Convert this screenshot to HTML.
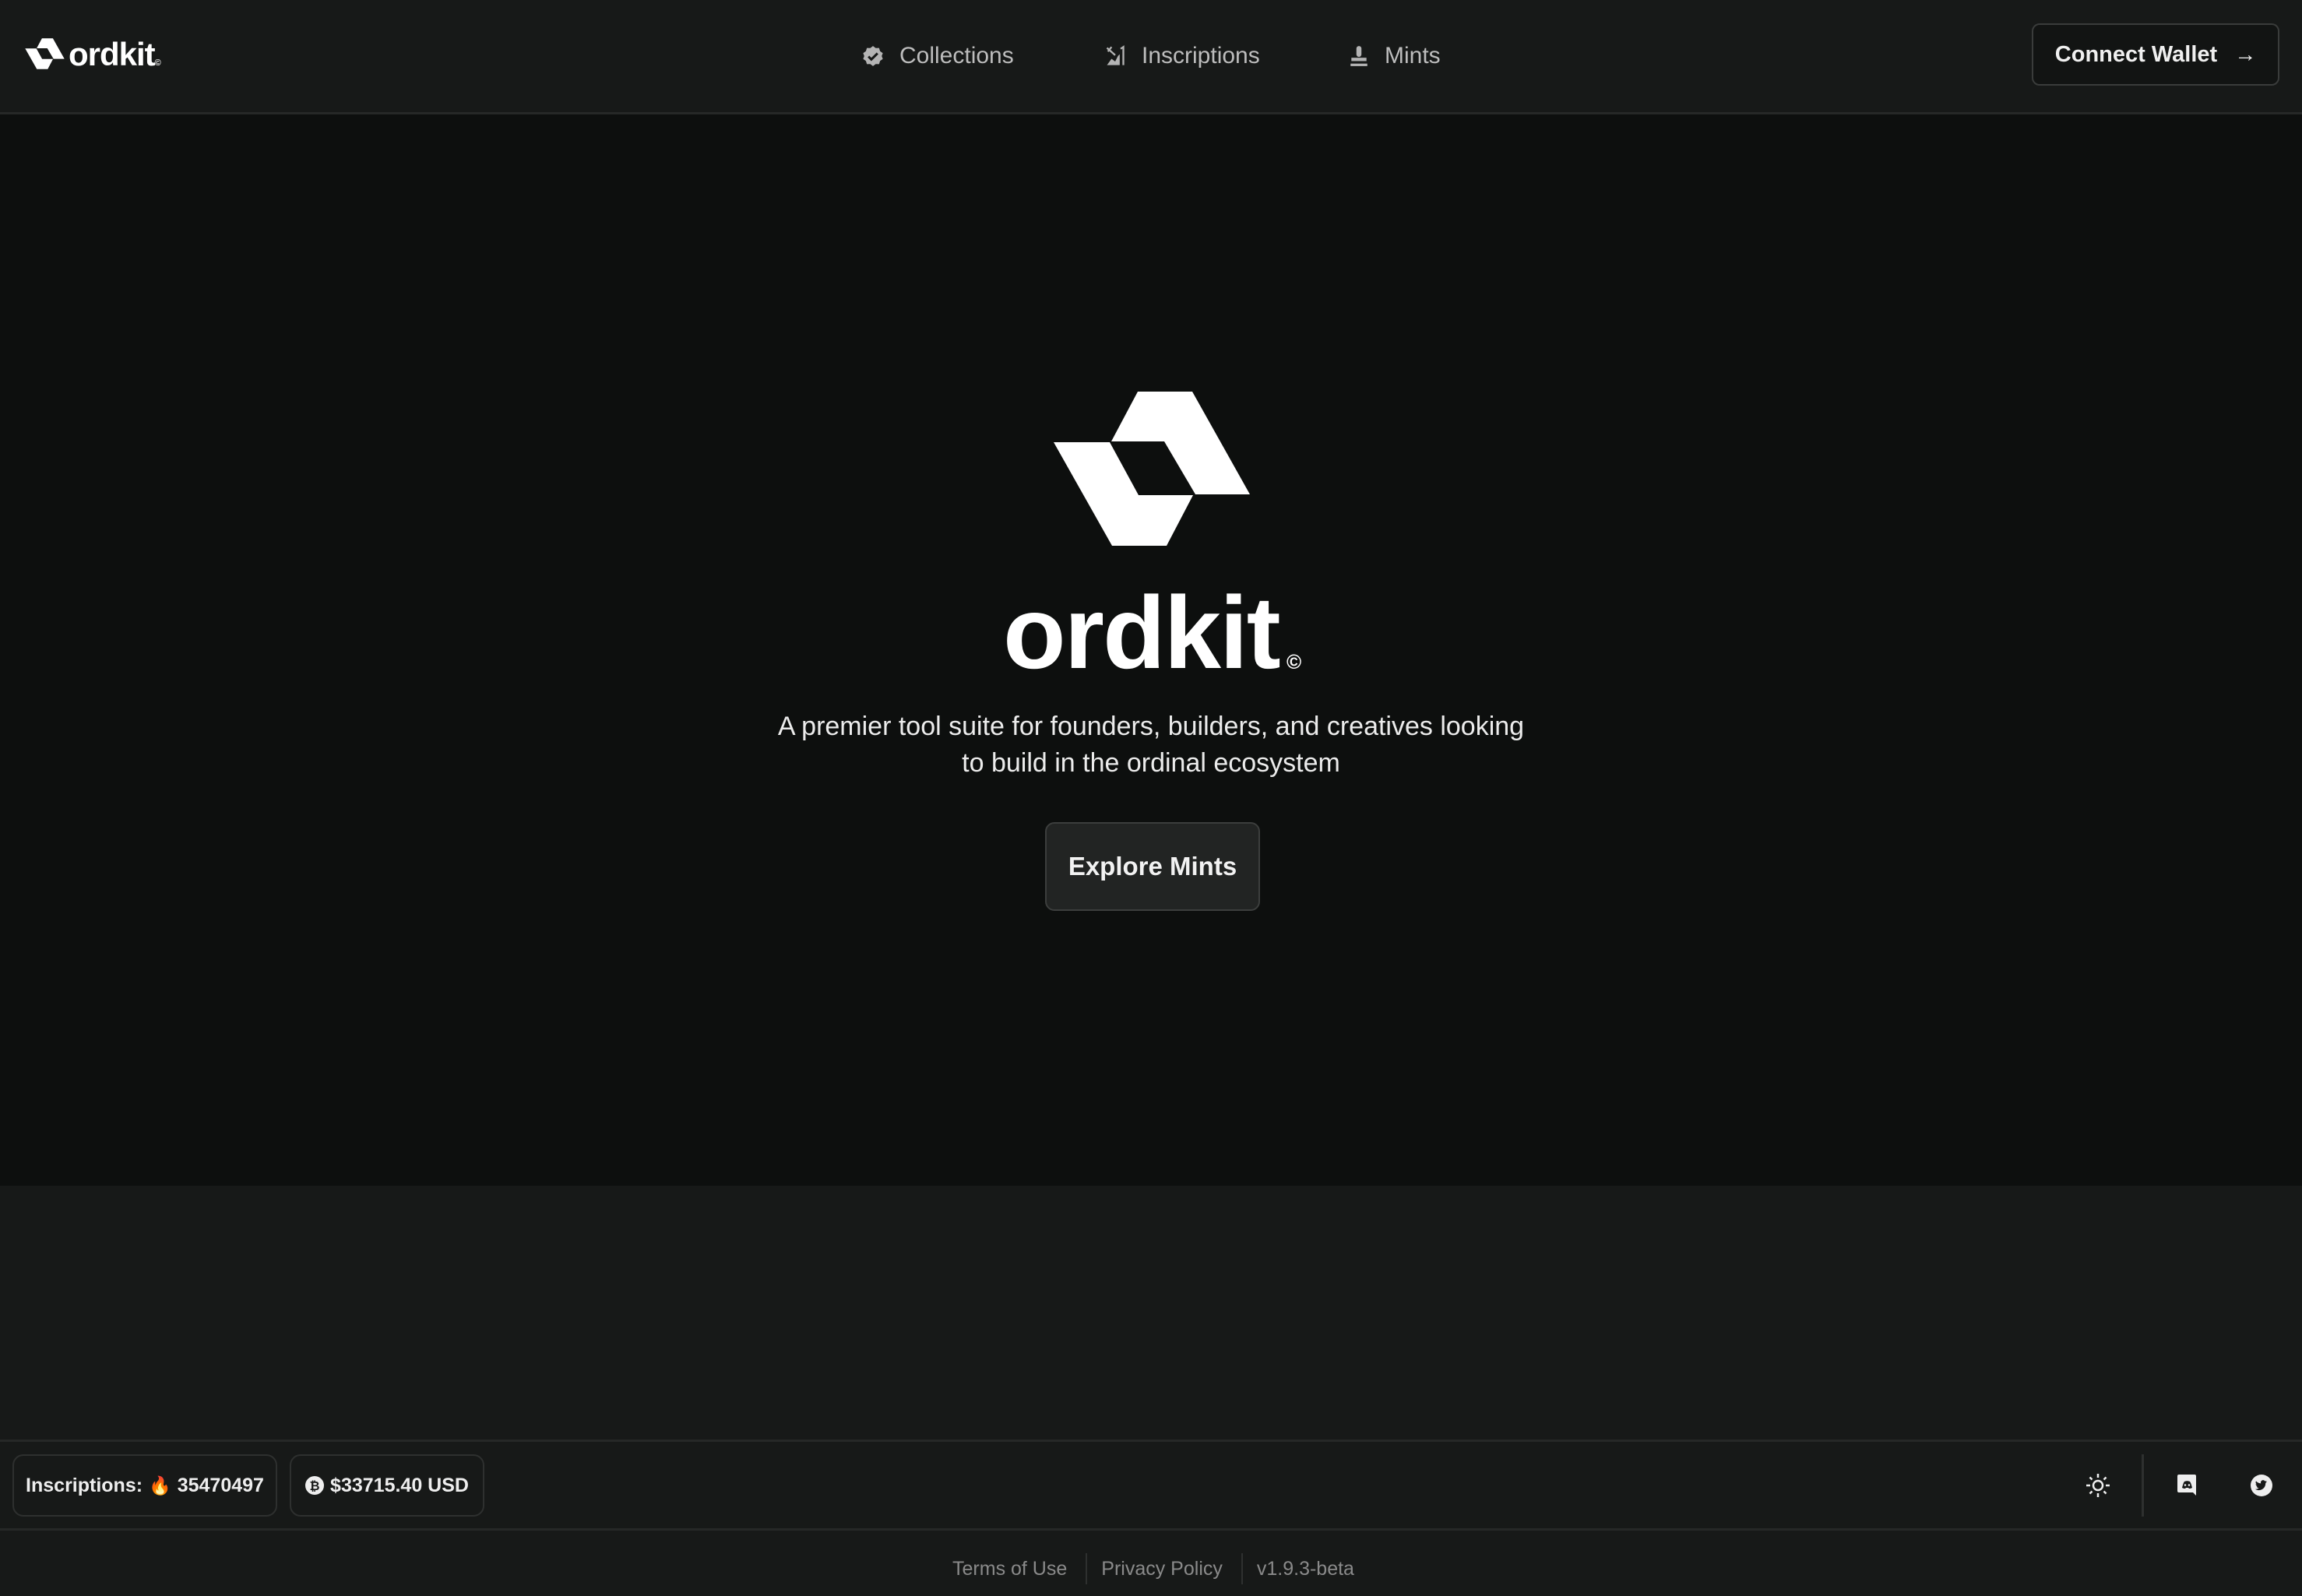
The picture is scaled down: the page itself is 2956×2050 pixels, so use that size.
<!DOCTYPE html>
<html><head><meta charset="utf-8"><style>
*{margin:0;padding:0;box-sizing:border-box}
body{width:2956px;height:2050px;background:#171918;font-family:"Liberation Sans",sans-serif;color:#fff;position:relative;overflow:hidden}
.abs{position:absolute}
header{position:absolute;left:0;top:0;width:2956px;height:147px;background:#171918;border-bottom:3px solid #262827}
.nav{position:absolute;top:52px;font-size:30px;color:#bdbdbd;display:flex;align-items:center;gap:20px;height:40px}
.hero{position:absolute;left:0;top:147px;width:2956px;height:1376px;background:#0d0f0e}
.pill{position:absolute;top:1868px;height:80px;border:2px solid #2e302f;border-radius:14px;display:flex;align-items:center;justify-content:center;font-size:25px;font-weight:bold;color:#eee;gap:8px}
.foot a{color:#8a8a8a;text-decoration:none}
</style></head><body>
<header>
 <svg class="abs" style="left:32px;top:49px" width="51" height="40" viewBox="0 0 252 200"><path fill="#fff" d="M108 1H178L252 133H182L142 65H74Z"/><path fill="#fff" d="M0 66H72L109 134H179L145 199H75Z"/></svg>
 <div class="abs" style="left:88px;top:46px;font-size:42px;font-weight:bold;letter-spacing:-1px">ordkit<span style="font-size:11px">©</span></div>
 <div class="nav" style="left:1107px"><svg width="28" height="28" viewBox="0 0 24 24"><path fill="#b4b4b4" d="M12 1l3 2.2 3.7-.1 1.1 3.5 3 2.2-1.2 3.2 1.2 3.2-3 2.2-1.1 3.5-3.7-.1L12 23l-3-2.2-3.700.1-1.1-3.5-3-2.2L2.4 12 1.2 8.8l3-2.2 1.1-3.5 3.7.1z"/><path d="M7 12.5l3.2 3.2L17 9" stroke="#171918" stroke-width="2.6" fill="none"/></svg><span>Collections</span></div>
 <div class="nav" style="left:1418px"><svg width="28" height="28" viewBox="0 0 24 24" fill="none" stroke="#b4b4b4" stroke-width="2"><path d="M3 3l9 8M8 2l-4 5"/><path fill="#b4b4b4" stroke="none" d="M3 22l5-7 4 3 3-6 2-2v12z"/><path d="M18 4l3-2v20"/></svg><span>Inscriptions</span></div>
 <div class="nav" style="left:1732px"><svg width="26" height="28" viewBox="0 0 24 26" fill="#b4b4b4"><rect x="9" y="1" width="6" height="13" rx="3"/><rect x="3" y="15" width="18" height="4"/><rect x="2" y="22" width="20" height="3"/></svg><span>Mints</span></div>
 <div class="abs" style="left:2609px;top:30px;width:318px;height:80px;border:2px solid #3a3c3b;border-radius:10px;background:#121413;display:flex;align-items:center;justify-content:center;font-size:29px;font-weight:bold;color:#f0f0f0;gap:22px"><span>Connect Wallet</span><span style="font-weight:normal;font-size:28px">→</span></div>
</header>
<div class="hero">
 <svg class="abs" style="left:1353px;top:355px" width="252" height="200" viewBox="0 0 252 200"><path fill="#fff" d="M108 1H178L252 133H182L142 65H74Z"/><path fill="#fff" d="M0 66H72L109 134H179L145 199H75Z"/></svg>
 <div class="abs" style="left:1288px;top:591px;font-size:132px;font-weight:bold;letter-spacing:-2px;line-height:150px">ordkit</div>
 <div class="abs" style="left:1652px;top:688px;font-size:26px;font-weight:bold">©</div>
 <div class="abs" style="left:858px;top:763px;width:1240px;text-align:center;font-size:34px;line-height:47px;color:#ececec">A premier tool suite for founders, builders, and creatives looking<br>to build in the ordinal ecosystem</div>
 <div class="abs" style="left:1342px;top:909px;width:276px;height:114px;background:#222423;border:2px solid #3c3e3d;border-radius:12px;display:flex;align-items:center;justify-content:center;font-size:33px;font-weight:bold;color:#f2f2f2">Explore Mints</div>
</div>
<div class="abs" style="left:0;top:1849px;width:2956px;height:3px;background:#262827"></div>
<div class="abs" style="left:0;top:1963px;width:2956px;height:3px;background:#262827"></div>
<div class="pill" style="left:16px;width:340px">Inscriptions: <span style="font-size:23px">🔥</span>35470497</div>
<div class="pill" style="left:372px;width:250px"><svg width="24" height="24" viewBox="0 0 24 24"><circle cx="12" cy="12" r="12" fill="#eee"/><text x="12" y="18" text-anchor="middle" font-size="16" font-weight="bold" fill="#171918" font-family="Liberation Sans">₿</text></svg>$33715.40 USD</div>
<svg class="abs" style="left:2678px;top:1892px" width="32" height="32" viewBox="0 0 32 32" stroke="#eee" stroke-width="2.5" fill="none"><circle cx="16" cy="16" r="6"/><path d="M16 1v5M16 26v5M1 16h5M26 16h5M5.5 5.5l3 3M23.5 23.5l3 3M5.5 26.5l3-3M23.5 8.5l3-3"/></svg>
<div class="abs" style="left:2750px;top:1868px;width:3px;height:80px;background:#2e302f"></div>
<svg class="abs" style="left:2796px;top:1894px" width="25" height="28" viewBox="0 0 25 28"><path fill="#eee" d="M2 0h20a2 2 0 0 1 2 2v25l-4-4H2a2 2 0 0 1-2-2V2a2 2 0 0 1 2-2z"/><path fill="#171918" d="M6 17c1-4 2-7 3-8 2-1 5-1 7 0 1 1 2 4 3 8-2 1-3 1-4 1l-1-1h-3l-1 1c-1 0-2 0-4-1z"/><circle cx="10" cy="13.5" r="1.3" fill="#eee"/><circle cx="15" cy="13.5" r="1.3" fill="#eee"/></svg>
<svg class="abs" style="left:2890px;top:1894px" width="28" height="28" viewBox="0 0 28 28"><circle cx="14" cy="14" r="14" fill="#eee"/><path fill="#171918" d="M21 9c-.6.3-1.2.4-1.8.5.7-.4 1.1-1 1.4-1.7-.6.4-1.3.6-2 .8a3 3 0 0 0-5.3 2.8C10.7 11.3 8.6 10.200 7 8.4c-.9 1.5-.4 3.3 1 4.1-.5 0-1-.2-1.4-.4 0 1.5 1 2.8 2.4 3.1-.4.1-.9.1-1.300.1.4 1.2 1.6 2.1 2.9 2.1-1.3 1-3 1.5-4.6 1.3 1.4.9 3 1.4 4.6 1.4 5.7 0 8.8-4.8 8.6-9.1.6-.4 1.1-1 1.5-1.6z"/></svg>
<div class="abs foot" style="left:8px;top:1995px;width:2956px;display:flex;justify-content:center;align-items:center;font-size:25px;color:#8a8a8a;height:40px">
 <a style="margin-left:-10px">Terms of Use</a><span style="width:2px;height:40px;background:#2e302f;margin:0 18px 0 24px"></span><a>Privacy Policy</a><span style="width:2px;height:40px;background:#2e302f;margin:0 18px 0 24px"></span><a>v1.9.3-beta</a>
</div>
</body></html>
